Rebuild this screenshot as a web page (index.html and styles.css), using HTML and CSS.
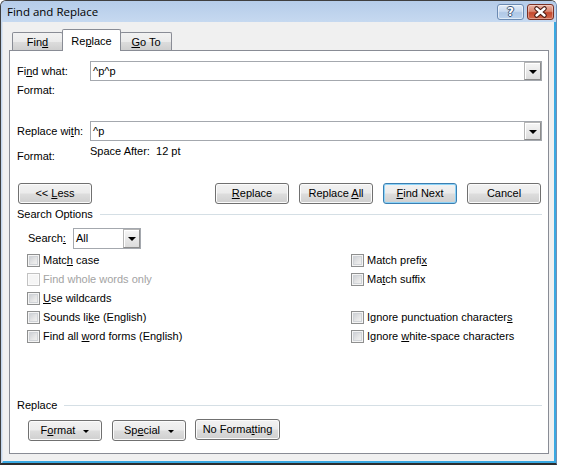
FILE: index.html
```html
<!DOCTYPE html>
<html>
<head>
<meta charset="utf-8">
<title>Find and Replace</title>
<link rel="stylesheet" href="styles.css">
</head>
<body>
<div class="window">
  <div class="titlebar">
    <span class="title">Find and Replace</span>
    <div class="caption-btns">
      <span class="cbtn help"><span class="qmark">?</span></span>
      <span class="cbtn close">
        <svg width="25" height="14" viewBox="0 0 25 14">
          <path d="M8.5 3.5 L16.5 10.5 M16.5 3.5 L8.5 10.5" stroke="#4a1a12" stroke-width="4.6" stroke-linecap="round"/>
          <path d="M8.5 3.5 L16.5 10.5 M16.5 3.5 L8.5 10.5" stroke="#ffffff" stroke-width="2.4" stroke-linecap="round"/>
        </svg>
      </span>
    </div>
  </div>
  <div class="client">
    <div class="tabs">
      <div class="tab t-find"><span>Fin<u>d</u></span></div>
      <div class="tab t-replace active"><span>Re<u>p</u>lace</span></div>
      <div class="tab t-goto"><span><u>G</u>o To</span></div>
    </div>
    <div class="panel">
      <div class="frow r-find">
        <span class="flabel">Fi<u>n</u>d what:</span>
        <div class="combo"><span class="val">^p^p</span><span class="drop"><span class="tri"></span></span></div>
      </div>
      <div class="fmt1">Format:</div>
      <div class="frow r-repl">
        <span class="flabel">Replace wi<u>t</u>h:</span>
        <div class="combo"><span class="val">^p</span><span class="drop"><span class="tri"></span></span></div>
      </div>
      <div class="fmt2">
        <span class="flabel lbl2">Format:</span>
        <span class="desc">Space After:  12 pt</span>
      </div>
      <div class="btnrow">
        <button class="btn"><span>&lt;&lt; <u>L</u>ess</span></button>
        <div class="btngroup">
          <button class="btn"><span><u>R</u>eplace</span></button>
          <button class="btn"><span>Replace <u>A</u>ll</span></button>
          <button class="btn default"><span><u>F</u>ind Next</span></button>
          <button class="btn"><span>Cancel</span></button>
        </div>
      </div>
      <div class="sechead s-search"><span>Search Options</span><span class="rule"></span></div>
      <div class="searchrow">
        <span class="slabel">Search<u>:</u></span>
        <div class="select"><span class="val">All</span><span class="drop"><span class="tri"></span></span></div>
      </div>
      <div class="options">
        <div class="opt"><span class="cb"></span><span>Matc<u>h</u> case</span></div>
        <div class="opt"><span class="cb"></span><span>Match prefi<u>x</u></span></div>
        <div class="opt disabled"><span class="cb"></span><span>Find whole words only</span></div>
        <div class="opt"><span class="cb"></span><span>Ma<u>t</u>ch suffix</span></div>
        <div class="opt"><span class="cb"></span><span><u>U</u>se wildcards</span></div>
        <div class="opt empty"></div>
        <div class="opt"><span class="cb"></span><span>Sounds li<u>k</u>e (English)</span></div>
        <div class="opt"><span class="cb"></span><span>Ignore punctuation character<u>s</u></span></div>
        <div class="opt"><span class="cb"></span><span>Find all <u>w</u>ord forms (English)</span></div>
        <div class="opt"><span class="cb"></span><span>Ignore <u>w</u>hite-space characters</span></div>
      </div>
      <div class="sechead s-replace"><span>Replace</span><span class="rule"></span></div>
      <div class="bottomrow">
        <button class="btn menu"><span>F<u>o</u>rmat</span><span class="mtri"></span></button>
        <button class="btn menu"><span>Sp<u>e</u>cial</span><span class="mtri"></span></button>
        <button class="btn wide"><span>No Forma<u>t</u>ting</span></button>
      </div>
    </div>
  </div>
</div>
</body>
</html>
```
FILE: styles.css
```css
html, body {
  margin: 0;
  padding: 0;
}
body {
  width: 562px;
  height: 467px;
  background: #ffffff;
  font: 11px "Liberation Sans", Arial, sans-serif;
  color: #000;
  overflow: hidden;
}
u {
  text-decoration: underline;
  text-underline-offset: 1px;
}

.window {
  box-sizing: border-box;
  width: 557px;
  height: 465px;
  border: 1px solid #3f3f3f;
  border-right-color: #6f8fb5;
  border-bottom: 2px solid #2d2d2d;
  border-radius: 6px 6px 0 0;
  background: #c3d6ed;
  display: flex;
  flex-direction: column;
  overflow: hidden;
}

.titlebar {
  height: 21px;
  flex: none;
  display: flex;
  justify-content: space-between;
  align-items: flex-start;
  background: linear-gradient(#b5cce9, #c6d9f0);
  padding: 0 2px 0 6px;
}
.title {
  font: 11.5px "Open Sans", "Liberation Sans", sans-serif;
  line-height: 22px;
  color: #000;
}
.caption-btns {
  display: flex;
  gap: 3px;
  margin-top: 3px;
}
.cbtn {
  box-sizing: border-box;
  width: 27px;
  height: 16px;
  border-radius: 3px;
  display: flex;
  align-items: center;
  justify-content: center;
}
.help {
  border: 1px solid #6b8ab2;
  background: linear-gradient(#e2ecf8 0%, #c9daf0 45%, #b0c8e6 55%, #bcd3ee 100%);
  box-shadow: inset 0 0 0 1px rgba(255,255,255,0.55);
}
.qmark {
  font: bold 12px "DejaVu Sans", sans-serif;
  color: #fff;
  line-height: 14px;
  text-shadow: 1px 0 0 #3a5577, -1px 0 0 #3a5577, 0 1px 0 #3a5577, 0 -1px 0 #3a5577;
}
.close {
  border: 1px solid #7a3024;
  background: linear-gradient(#eab3a5 0%, #d98670 45%, #c4472d 55%, #d46b4f 100%);
  box-shadow: inset 0 0 0 1px rgba(255,255,255,0.35);
}

.client {
  flex: 1;
  margin: 0 0 0 1px;
  background: #f0f0f0;
  border-left: 1px solid #dde5ef;
  border-right: 2px solid #3aa9e2;
  border-bottom: 2px solid #3aa9e2;
  padding: 7px 6px 0 6px;
  display: flex;
  flex-direction: column;
}

.tabs {
  height: 21px;
  display: flex;
  align-items: flex-end;
  padding-left: 3px;
  position: relative;
  z-index: 2;
}
.tab {
  box-sizing: border-box;
  height: 18px;
  border: 1px solid #898c95;
  border-bottom: none;
  border-radius: 2px 2px 0 0;
  background: linear-gradient(#f2f2f2 0%, #ebebeb 50%, #dddddd 51%, #cfcfcf 100%);
  display: flex;
  justify-content: center;
  align-items: flex-start;
  padding-top: 3px;
  line-height: 13px;
}
.t-find { width: 51px; }
.t-replace { width: 59px; margin-left: -1px; }
.t-goto { width: 52px; margin-left: -1px; }
.tab.active {
  height: 22px;
  margin-bottom: -1px;
  background: #ffffff;
  padding-top: 5px;
  position: relative;
  z-index: 3;
}

.panel {
  box-sizing: border-box;
  width: 540px;
  height: 404px;
  border: 1px solid #898c95;
  background: #ffffff;
  padding: 0 6px 0 7px;
  display: flex;
  flex-direction: column;
  line-height: 13px;
}

.frow {
  display: flex;
  align-items: center;
  height: 20px;
}
.r-find { margin-top: 10px; }
.r-repl { margin-top: 24px; }
.flabel {
  width: 73px;
  flex: none;
}
.combo {
  box-sizing: border-box;
  flex: 1;
  height: 20px;
  border: 1px solid #a4a8ae;
  display: flex;
  align-items: stretch;
  background: #fff;
}
.combo .val, .select .val {
  flex: 1;
  padding-left: 2px;
  display: flex;
  align-items: center;
}
.drop {
  box-sizing: border-box;
  width: 17px;
  border: 1px solid #8c8c8c;
  border-top-color: #b5b5b5;
  border-left-color: #b5b5b5;
  background: linear-gradient(#f6f6f6, #dcdcdc);
  box-shadow: inset 1px 1px 0 #ffffff;
  display: flex;
  align-items: center;
  justify-content: center;
}
.tri {
  width: 0;
  height: 0;
  border-left: 4px solid transparent;
  border-right: 4px solid transparent;
  border-top: 4px solid #000;
  margin-top: 1px;
}

.fmt1 { margin-top: 3px; }
.fmt2 {
  margin-top: 4px;
  height: 18px;
  display: flex;
  align-items: flex-start;
}
.lbl2 { padding-top: 5px; }
.desc { white-space: pre; }

.btnrow {
  margin-top: 20px;
  display: flex;
  justify-content: space-between;
  padding-left: 1px;
  padding-right: 1px;
}
.btngroup {
  display: flex;
  gap: 10px;
}
.btn {
  box-sizing: border-box;
  width: 74px;
  height: 21px;
  margin: 0;
  padding: 0;
  border: 1px solid #707070;
  border-radius: 3px;
  background: linear-gradient(#f2f2f2 0%, #ebebeb 48%, #dddddd 52%, #cfcfcf 100%);
  box-shadow: inset 0 0 0 1px #fbfbfb;
  font: 11px "Liberation Sans", Arial, sans-serif;
  color: #000;
  line-height: 13px;
  display: flex;
  align-items: center;
  justify-content: center;
  white-space: pre;
}
.btn.default {
  border-color: #3c7fb1;
  box-shadow: inset 0 0 0 1px #8cd3f8;
}
.btn.menu .mtri {
  width: 0;
  height: 0;
  border-left: 3px solid transparent;
  border-right: 3px solid transparent;
  border-top: 3px solid #000;
  margin-left: 8px;
  margin-top: 1px;
}
.btn.wide { width: 85px; }

.sechead {
  display: flex;
  align-items: center;
}
.sechead .rule {
  flex: 1;
  height: 1px;
  background: #d5dfe5;
  margin-left: 7px;
}
.s-search { margin-top: 4px; }
.s-replace { margin-top: 53px; }

.searchrow {
  margin-top: 7px;
  margin-left: 11px;
  display: flex;
  align-items: center;
}
.slabel {
  width: 45px;
  flex: none;
}
.select {
  box-sizing: border-box;
  width: 68px;
  height: 21px;
  border: 1px solid #a4a8ae;
  display: flex;
  align-items: stretch;
  background: #fff;
}

.options {
  margin-top: 2px;
  margin-left: 10px;
  display: grid;
  grid-template-columns: 324px 1fr;
  grid-auto-rows: 19px;
}
.opt {
  display: flex;
  align-items: center;
}
.cb {
  box-sizing: border-box;
  width: 13px;
  height: 13px;
  margin-right: 3px;
  flex: none;
  border: 1px solid #8e8f8f;
  background: linear-gradient(135deg, #c4c8ce 0%, #e8e8e8 60%, #f6f6f6 100%);
  box-shadow: inset 0 0 0 1px #f4f4f4, inset 0 0 0 2px #d0d3d7;
}
.opt.disabled {
  color: #a3a3a3;
}
.opt.disabled .cb {
  border-color: #c2c2c2;
  background: #f5f5f5;
  box-shadow: inset 0 0 0 1px #fbfbfb;
}

.bottomrow {
  margin-top: 7px;
  margin-left: 11px;
  display: flex;
  align-items: flex-start;
}
.bottomrow .btn.menu { margin-top: 1px; }
.bottomrow .btn.menu + .btn.menu { margin-left: 10px; }
.bottomrow .btn.wide { margin-left: 9px; }
```
